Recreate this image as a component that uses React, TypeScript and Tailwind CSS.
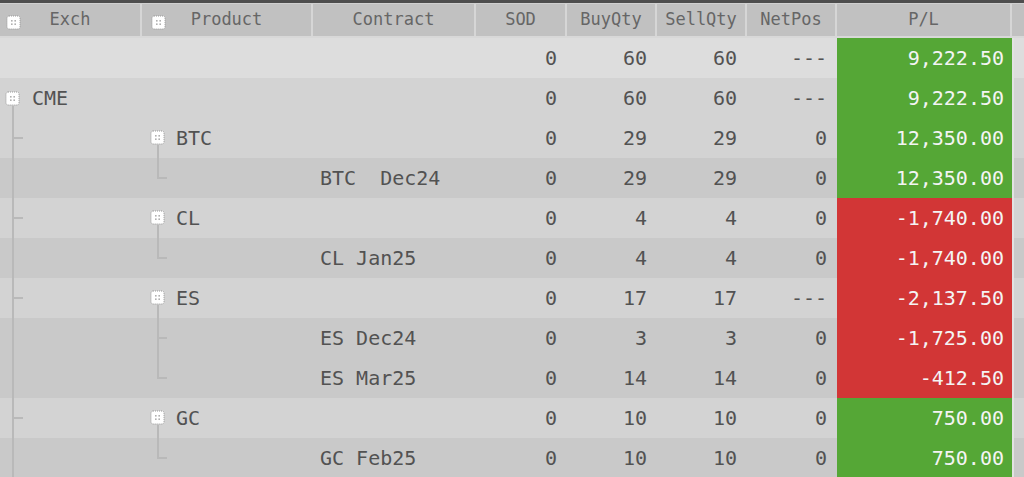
import React from "react";

type Row = {
  level: 0 | 1 | 2 | 3;
  exch?: string;
  product?: string;
  contract?: string;
  sod: string;
  buy: string;
  sell: string;
  net: string;
  pl: string;
  neg: boolean;
  last?: boolean;
};

const rows: Row[] = [
  { level: 0, sod: "0", buy: "60", sell: "60", net: "---", pl: "9,222.50", neg: false },
  { level: 1, exch: "CME", sod: "0", buy: "60", sell: "60", net: "---", pl: "9,222.50", neg: false },
  { level: 2, product: "BTC", sod: "0", buy: "29", sell: "29", net: "0", pl: "12,350.00", neg: false },
  { level: 3, contract: "BTC  Dec24", sod: "0", buy: "29", sell: "29", net: "0", pl: "12,350.00", neg: false, last: true },
  { level: 2, product: "CL", sod: "0", buy: "4", sell: "4", net: "0", pl: "-1,740.00", neg: true },
  { level: 3, contract: "CL Jan25", sod: "0", buy: "4", sell: "4", net: "0", pl: "-1,740.00", neg: true, last: true },
  { level: 2, product: "ES", sod: "0", buy: "17", sell: "17", net: "---", pl: "-2,137.50", neg: true },
  { level: 3, contract: "ES Dec24", sod: "0", buy: "3", sell: "3", net: "0", pl: "-1,725.00", neg: true },
  { level: 3, contract: "ES Mar25", sod: "0", buy: "14", sell: "14", net: "0", pl: "-412.50", neg: true, last: true },
  { level: 2, product: "GC", sod: "0", buy: "10", sell: "10", net: "0", pl: "750.00", neg: false },
  { level: 3, contract: "GC Feb25", sod: "0", buy: "10", sell: "10", net: "0", pl: "750.00", neg: false, last: true },
];

const font = { fontFamily: '"DejaVu Sans Mono", "Liberation Mono", monospace' };

function TreeIcon() {
  return (
    <svg width="15" height="15" viewBox="0 0 15 15" className="shrink-0">
      <rect x="1" y="1" width="13" height="13" rx="2" fill="#ffffff" stroke="#9a9a9a" strokeWidth="1" strokeDasharray="1 1" />
      <rect x="5" y="5" width="1.6" height="1.6" fill="#b0b0b0" />
      <rect x="8.4" y="5" width="1.6" height="1.6" fill="#b0b0b0" />
      <rect x="5" y="8.4" width="1.6" height="1.6" fill="#b0b0b0" />
      <rect x="8.4" y="8.4" width="1.6" height="1.6" fill="#b0b0b0" />
    </svg>
  );
}

function HeaderCell({ w, label, icon }: { w: string; label: string; icon?: string }) {
  return (
    <div className={`${w} h-full flex items-center relative bg-[#c1c1c1] border-r-2 border-[#d6d6d6]`}>
      {icon && (
        <div className={`absolute ${icon} top-[11px]`}>
          <TreeIcon />
        </div>
      )}
      <span className="w-full text-center text-[17px] text-[#666666]">{label}</span>
    </div>
  );
}

const LINE = "bg-[#b9b9b9]";

function ExchGutter({ row }: { row: Row }) {
  if (row.level === 0) return <div className="w-[28px] h-full" />;
  if (row.level === 1) {
    return (
      <div className="w-[28px] h-full relative flex items-center">
        <div className="absolute left-[5px] top-[13px]">
          <TreeIcon />
        </div>
        <div className={`absolute left-[12px] top-[28px] bottom-0 w-[2px] ${LINE}`} />
      </div>
    );
  }
  return (
    <div className="w-[28px] h-full relative">
      <div className={`absolute left-[12px] top-0 bottom-0 w-[2px] ${LINE}`} />
      {row.level === 2 && <div className={`absolute left-[14px] top-[19px] w-[9px] h-[2px] ${LINE}`} />}
    </div>
  );
}

function ProductGutter({ row }: { row: Row }) {
  if (row.level === 2) {
    return (
      <div className="w-[34px] h-full relative">
        <div className="absolute left-[8px] top-[12px]">
          <TreeIcon />
        </div>
        <div className={`absolute left-[15px] top-[27px] bottom-0 w-[2px] ${LINE}`} />
      </div>
    );
  }
  if (row.level === 3) {
    return (
      <div className="w-[34px] h-full relative">
        <div className={`absolute left-[15px] top-0 w-[2px] ${LINE} ${row.last ? "h-[21px]" : "bottom-0"}`} />
        <div className={`absolute left-[17px] top-[19px] w-[8px] h-[2px] ${LINE}`} />
      </div>
    );
  }
  return <div className="w-[34px] h-full" />;
}

function DataRow({ row }: { row: Row }) {
  const bg =
    row.level === 0 ? "bg-[#dddddd]" : row.level === 3 ? "bg-[#c9c9c9]" : "bg-[#d3d3d3]";
  return (
    <div className={`flex h-[40px] ${bg} text-[20px] text-[#525252]`}>
      <div className="w-[142px] h-full flex items-center">
        <ExchGutter row={row} />
        {row.exch && <span className="ml-[4px]">{row.exch}</span>}
      </div>
      <div className="w-[171px] h-full flex items-center">
        <ProductGutter row={row} />
        {row.product && <span>{row.product}</span>}
      </div>
      <div className="w-[163px] h-full flex items-center pl-[7px] whitespace-pre">
        {row.contract ?? ""}
      </div>
      <div className="w-[91px] h-full flex items-center justify-end pr-[10px]">{row.sod}</div>
      <div className="w-[90px] h-full flex items-center justify-end pr-[10px]">{row.buy}</div>
      <div className="w-[90px] h-full flex items-center justify-end pr-[10px]">{row.sell}</div>
      <div className="w-[90px] h-full flex items-center justify-end pr-[10px]">{row.net}</div>
      <div
        className={`w-[175px] h-full flex items-center justify-end pr-[8px] text-[#f4f4f4] ${
          row.neg ? "bg-[#d23636]" : "bg-[#55a736]"
        }`}
      >
        {row.pl}
      </div>
      <div className="flex-1 h-full border-l-2 border-[#e2e2e2]" />
    </div>
  );
}

export default function App() {
  return (
    <div className="w-[1024px] h-[477px] overflow-hidden bg-[#d3d3d3]" style={font}>
      <div className="h-[3px] bg-[#4e4e4e]" />
      <div className="h-[35px] flex border-t border-[#d0d0d0] border-b-2 border-b-[#d8d8d8]">
        <HeaderCell w="w-[142px]" label="Exch" icon="left-[6px]" />
        <HeaderCell w="w-[171px]" label="Product" icon="left-[9px]" />
        <HeaderCell w="w-[163px]" label="Contract" />
        <HeaderCell w="w-[91px]" label="SOD" />
        <HeaderCell w="w-[90px]" label="BuyQty" />
        <HeaderCell w="w-[90px]" label="SellQty" />
        <HeaderCell w="w-[90px]" label="NetPos" />
        <HeaderCell w="w-[175px]" label="P/L" />
        <div className="flex-1 h-full bg-[#c1c1c1]" />
      </div>
      {rows.map((r, i) => (
        <DataRow key={i} row={r} />
      ))}
    </div>
  );
}
